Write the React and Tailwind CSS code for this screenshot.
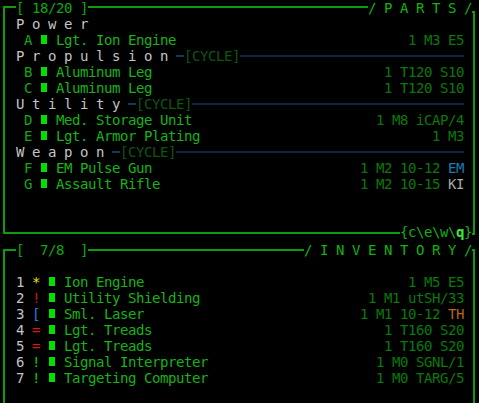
import React from 'react';

const parts = [
  { section: 'P o w e r' },
  { slot: 'A', name: 'Lgt. Ion Engine', stats: '1 M3 E5' },
  { section: 'P r o p u l s i o n', cycle: true },
  { slot: 'B', name: 'Aluminum Leg', stats: '1 T120 S10' },
  { slot: 'C', name: 'Aluminum Leg', stats: '1 T120 S10' },
  { section: 'U t i l i t y', cycle: true },
  { slot: 'D', name: 'Med. Storage Unit', stats: '1 M8 iCAP/4' },
  { slot: 'E', name: 'Lgt. Armor Plating', stats: '1 M3' },
  { section: 'W e a p o n', cycle: true },
  { slot: 'F', name: 'EM Pulse Gun', stats: '1 M2 10-12 ', tag: 'EM', tagColor: 'text-[#1a7db4]' },
  { slot: 'G', name: 'Assault Rifle', stats: '1 M2 10-15 ', tag: 'KI', tagColor: 'text-[#ababab]' },
];

const inventory = [
  { n: '1', sym: '*', symColor: 'text-[#e6e01e]', name: 'Ion Engine', stats: '1 M5 E5' },
  { n: '2', sym: '!', symColor: 'text-[#d41212]', name: 'Utility Shielding', stats: '1 M1 utSH/33' },
  { n: '3', sym: '[', symColor: 'text-[#2a7ae2]', name: 'Sml. Laser', stats: '1 M1 10-12 ', tag: 'TH', tagColor: 'text-[#b8661a]' },
  { n: '4', sym: '=', symColor: 'text-[#d81818]', name: 'Lgt. Treads', stats: '1 T160 S20' },
  { n: '5', sym: '=', symColor: 'text-[#d81818]', name: 'Lgt. Treads', stats: '1 T160 S20' },
  { n: '6', sym: '!', symColor: 'text-[#18c018]', name: 'Signal Interpreter', stats: '1 M0 SGNL/1' },
  { n: '7', sym: '!', symColor: 'text-[#18c018]', name: 'Targeting Computer', stats: '1 M0 TARG/5' },
];

function Block() {
  return (
    <span className="w-2 h-4 flex-none">
      <span className="block ml-px mt-[3px] w-[6px] h-[9px] bg-[#00e000]" />
    </span>
  );
}

function Stats({ stats, tag, tagColor }) {
  return (
    <span className="ml-auto text-[#0a7a0a]">
      {stats}
      {tag && <span className={tagColor}>{tag}</span>}
    </span>
  );
}

function SectionRow({ section, cycle }) {
  return (
    <div className="flex h-4 whitespace-pre">
      <span className="text-[#c4c4c4]">{section}</span>
      {cycle && (
        <>
          <span> </span>
          <span className="w-2 mt-[7px] h-[2px] bg-[#163858]" />
          <span className="text-[#0f560f]">[CYCLE]</span>
          <span className="flex-1 mt-[7px] h-[2px] bg-[#0d2846]" />
        </>
      )}
    </div>
  );
}

function PartRow({ slot, name, stats, tag, tagColor }) {
  return (
    <div className="flex h-4 whitespace-pre">
      <span className="text-[#13a813]">{` ${slot} `}</span>
      <Block />
      <span className="text-[#15b515]">{` ${name}`}</span>
      <Stats stats={stats} tag={tag} tagColor={tagColor} />
    </div>
  );
}

function InvRow({ n, sym, symColor, name, stats, tag, tagColor }) {
  return (
    <div className="flex h-4 whitespace-pre">
      <span className="text-[#c4c4c4]">{n}</span>
      <span> </span>
      <span className={symColor}>{sym}</span>
      <span> </span>
      <Block />
      <span className="text-[#15b515]">{` ${name}`}</span>
      <Stats stats={stats} tag={tag} tagColor={tagColor} />
    </div>
  );
}

export default function App() {
  return (
    <div className="w-[479px] h-[403px] bg-black overflow-hidden font-['DejaVu_Sans_Mono',monospace] text-[14px] leading-4 tracking-[-0.43px]">
      {/* Parts panel */}
      <div className="h-[240px] flex flex-col">
        <div className="flex h-4 whitespace-pre">
          <span className="ml-[3px] mt-[6px] w-[13px] h-[10px] border-l-2 border-t-2 border-[#0c9c0c]" />
          <span className="text-[#0ea80e]">[ 18/20 ]</span>
          <span className="flex-1 mt-[6px] h-[2px] bg-[#0c9c0c]" />
          <span className="text-[#10b410]">/ P A R T S /</span>
          <span className="mt-[11px] w-[3px] h-[5px] border-t-2 border-r-2 border-[#0c9c0c]" />
          <span className="w-[4px]" />
        </div>

        <div className="ml-[3px] w-[472px] h-[208px] border-x-2 border-[#0c9c0c] pl-[11px] pr-[9px]">
          {parts.map((p, i) =>
            p.section ? <SectionRow key={i} {...p} /> : <PartRow key={i} {...p} />
          )}
        </div>

        <div className="flex h-4 whitespace-pre">
          <span className="ml-[3px] flex-1 h-[10px] border-l-2 border-b-2 border-[#0c9c0c]" />
          <span className="text-[#10b010]">
            {'{c\\e\\w\\'}
            <span className="text-[#3ce83c] font-bold">q</span>
            {'}'}
          </span>
          <span className="w-[3px] h-[11px] border-r-2 border-b-2 border-[#0c9c0c]" />
          <span className="w-[4px]" />
        </div>
      </div>

      {/* Inventory panel */}
      <div className="mt-[2px] flex flex-col">
        <div className="flex h-4 whitespace-pre">
          <span className="ml-[3px] mt-[7px] w-[13px] h-[9px] border-l-2 border-t-2 border-[#0c9c0c]" />
          <span className="text-[#0ea80e]">[  7/8  ]</span>
          <span className="flex-1 mt-[7px] h-[2px] bg-[#0c9c0c]" />
          <span className="text-[#10b410]">/ I N V E N T O R Y /</span>
          <span className="mt-[7px] w-[3px] h-[9px] border-t-2 border-r-2 border-[#0c9c0c]" />
          <span className="w-[4px]" />
        </div>

        <div className="ml-[3px] w-[472px] h-[145px] border-x-2 border-[#0c9c0c] pl-[11px] pr-[9px]">
          <div className="h-4" />
          {inventory.map((it) => (
            <InvRow key={it.n} {...it} />
          ))}
        </div>
      </div>
    </div>
  );
}
